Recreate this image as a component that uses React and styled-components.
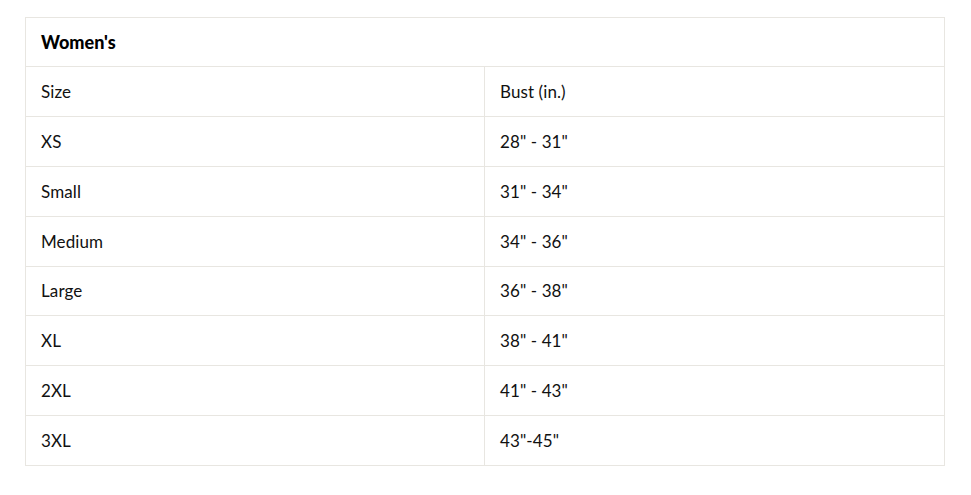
import React from "react"
import styled, { createGlobalStyle } from "styled-components"

const rows = [
  ["XS", `28" - 31"`],
  ["Small", `31" - 34"`],
  ["Medium", `34" - 36"`],
  ["Large", `36" - 38"`],
  ["XL", `38" - 41"`],
  ["2XL", `41" - 43"`],
  ["3XL", `43"-45"`],
]

const App = () => {
  return (
    <Page>
      <GlobalStyle />
      <Table>
        <colgroup>
          <Col $width="459px" />
          <Col />
        </colgroup>
        <thead>
          <tr>
            <Title colSpan={2}>Women's</Title>
          </tr>
        </thead>
        <tbody>
          <tr>
            <Cell>Size</Cell>
            <Cell>Bust (in.)</Cell>
          </tr>
          {rows.map(([size, bust]) => (
            <tr key={size}>
              <Cell>{size}</Cell>
              <Cell>{bust}</Cell>
            </tr>
          ))}
        </tbody>
      </Table>
    </Page>
  )
}

export default App

const GlobalStyle = createGlobalStyle`
  body {
    margin: 0;
    background: #fff;
    font-family: "Lato", "Liberation Sans", sans-serif;
    color: #111;
  }
`

const Page = styled.div`
  padding: 17px 26px 0 25px;
`

const Table = styled.table`
  width: 920px;
  border-collapse: collapse;
  table-layout: fixed;
`

const Col = styled.col`
  width: ${(p) => p.$width || "auto"};
`

const Title = styled.th`
  height: 48px;
  padding: 0 15px;
  border: 1px solid #e8e6e1;
  text-align: left;
  font-size: 18px;
  font-weight: 900;
  color: #000;
`

const Cell = styled.td`
  height: 48.88px;
  padding: 0 15px;
  border: 1px solid #e8e6e1;
  font-size: 17px;
  letter-spacing: 0.1px;
`
